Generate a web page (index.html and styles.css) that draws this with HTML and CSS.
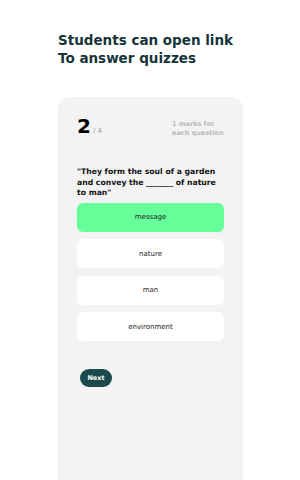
FILE: index.html
```html
<!DOCTYPE html>
<html>
<head>
<meta charset="utf-8">
<link rel="stylesheet" href="styles.css">
</head>
<body>
<div class="page">
  <h1 class="title">Students can open link<br>To answer quizzes</h1>
  <div class="card">
    <div class="head">
      <div class="count"><span class="num">2</span><span class="total">/ 4</span></div>
      <div class="marks">1 marks for<br>each question</div>
    </div>
    <p class="question">"They form the soul of a garden and convey the _______ of nature to man"</p>
    <div class="options">
      <div class="option selected">message</div>
      <div class="option">nature</div>
      <div class="option">man</div>
      <div class="option">environment</div>
    </div>
    <button class="next">Next</button>
  </div>
</div>
</body>
</html>
```

FILE: styles.css
```css
html, body {
  margin: 0;
  padding: 0;
  background: #ffffff;
}
body {
  font-family: "DejaVu Sans", "Open Sans", sans-serif;
  color: #1a1a1a;
  width: 300px;
  height: 480px;
  overflow: hidden;
}
.page {
  padding: 31px 0 0 58px;
}
.title {
  margin: 0;
  font-size: 13.5px;
  line-height: 18px;
  font-weight: bold;
  color: #15353a;
  letter-spacing: 0;
}
.card {
  margin-top: 30px;
  width: 185px;
  height: 400px;
  background: #f3f3f3;
  border-radius: 12px;
  box-sizing: border-box;
  padding: 19px 19px 0 19px;
}
.head {
  display: flex;
  justify-content: space-between;
  align-items: flex-start;
}
.count {
  display: flex;
  align-items: baseline;
}
.num {
  font-size: 20px;
  font-weight: bold;
  line-height: 20px;
  color: #000;
}
.total {
  font-size: 7px;
  color: #9a9a9a;
  margin-left: 2px;
}
.marks {
  font-size: 6.5px;
  line-height: 8.5px;
  color: #b8b8b8;
  font-weight: bold;
  width: 52px;
  padding-top: 4px;
}
.question {
  margin: 30px 0 0 0;
  font-size: 7.7px;
  line-height: 10.5px;
  font-weight: bold;
  color: #111;
}
.options {
  margin-top: 4px;
  display: flex;
  flex-direction: column;
  gap: 7.5px;
}
.option {
  height: 29px;
  border-radius: 6px;
  background: #ffffff;
  display: flex;
  align-items: center;
  justify-content: center;
  font-size: 7px;
  color: #222;
}
.option.selected {
  background: #66ff99;
}
.next {
  display: block;
  margin: 28px 0 0 3px;
  width: 32px;
  height: 18px;
  border: none;
  border-radius: 9px;
  background: #1b4a4c;
  color: #fff;
  font-family: "DejaVu Sans", sans-serif;
  font-weight: bold;
  font-size: 6.5px;
  padding: 0;
}
```
